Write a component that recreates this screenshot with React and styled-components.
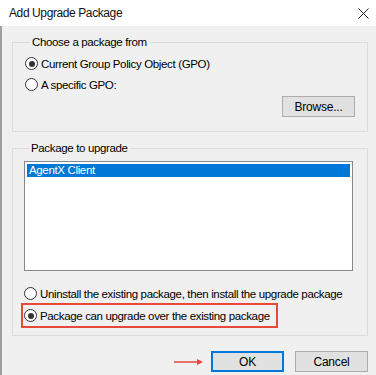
import React, { useState } from 'react';
import styled, { createGlobalStyle } from 'styled-components';

const GlobalStyle = createGlobalStyle`
  html, body {
    margin: 0;
    padding: 0;
    background: #f0f0f0;
  }
  body {
    font-family: "Liberation Sans", Arial, sans-serif;
    font-size: 11.5px;
    color: #000;
  }
`;

const Window = styled.div`
  width: 376px;
  height: 375px;
  display: flex;
  flex-direction: column;
  overflow: hidden;
  background: #f0f0f0;
`;

const TitleBar = styled.div`
  height: 26px;
  flex: none;
  background: #fff;
  display: flex;
  align-items: center;
  justify-content: space-between;
  padding: 0 7px 0 9px;
`;

const Title = styled.div`
  font-size: 12px;
  letter-spacing: -0.4px;
  color: #111;
`;

const CloseIcon = styled.svg`
  width: 11px;
  height: 11px;
`;

const Body = styled.div`
  flex: 1;
  border-left: 2px solid #a0a0a0;
  display: flex;
  flex-direction: column;
  padding: 10px 8px 0 10px;
`;

const Group = styled.fieldset`
  margin: ${p => p.$mt || 0}px 0 0 0;
  border: 1px solid #dcdcdc;
  padding: ${p => p.$pad};
  min-width: 0;
`;

const Legend = styled.legend`
  padding: 0 2px;
  margin-left: 5px;
  letter-spacing: -0.35px;
`;

const RadioRow = styled.label`
  display: flex;
  align-items: center;
  gap: 3px;
  height: 21px;
  letter-spacing: -0.35px;
  white-space: nowrap;
`;

const RadioCircle = styled.span`
  width: 11px;
  height: 11px;
  border: 1px solid #333;
  border-radius: 50%;
  background: #fff;
  display: flex;
  align-items: center;
  justify-content: center;
  flex: none;
  &::after {
    content: '';
    width: 6px;
    height: 6px;
    border-radius: 50%;
    background: ${p => (p.$checked ? '#333' : 'transparent')};
  }
`;

const BrowseRow = styled.div`
  display: flex;
  justify-content: flex-end;
  margin-top: 1px;
`;

const Button = styled.button`
  font-family: inherit;
  font-size: 12px;
  letter-spacing: -0.2px;
  width: 73px;
  height: 21px;
  padding: 0;
  background: #e1e1e1;
  color: #000;
  border: ${p => (p.$default ? '2px solid #0078d7' : '1px solid #adadad')};
`;

const ListBox = styled.div`
  height: 110px;
  border: 1px solid #828790;
  background: #fff;
  padding: 2px;
  box-sizing: border-box;
  margin-bottom: 12px;
`;

const ListItem = styled.div`
  height: 13px;
  line-height: 13px;
  padding-left: 2px;
  letter-spacing: -0.35px;
  background: ${p => (p.$selected ? '#0078d7' : 'transparent')};
  color: ${p => (p.$selected ? '#fff' : '#000')};
`;

const Highlight = styled.div`
  border: 2px solid #e8473c;
  margin: -1px 0 0 -3px;
  padding-left: 1px;
  width: 252px;
  height: 21px;
  display: flex;
  align-items: center;
`;

const Footer = styled.div`
  display: flex;
  align-items: center;
  justify-content: flex-end;
  gap: 11px;
  margin-top: 15px;
`;

const Arrow = styled.svg`
  width: 30px;
  height: 8px;
  margin-right: -4px;
`;

const Radio = ({ checked, children }) => (
  <RadioRow>
    <RadioCircle $checked={checked} />
    {children}
  </RadioRow>
);

export default function App() {
  const [source, setSource] = useState('gpo');
  const [mode, setMode] = useState('over');

  return (
    <>
      <GlobalStyle />
      <Window>
        <TitleBar>
          <Title>Add Upgrade Package</Title>
          <CloseIcon viewBox="0 0 11 11">
            <path d="M0.5 0.5 L10.5 10.5 M10.5 0.5 L0.5 10.5" stroke="#222" strokeWidth="1" />
          </CloseIcon>
        </TitleBar>
        <Body>
          <Group $pad="5px 12px 14px 12px">
            <Legend>Choose a package from</Legend>
            <div onClick={() => setSource('gpo')}>
              <Radio checked={source === 'gpo'}>Current Group Policy Object (GPO)</Radio>
            </div>
            <div onClick={() => setSource('specific')}>
              <Radio checked={source === 'specific'}>A specific GPO:</Radio>
            </div>
            <BrowseRow>
              <Button>Browse...</Button>
            </BrowseRow>
          </Group>
          <Group $mt={10} $pad="7px 14px 7px 11px">
            <Legend>Package to upgrade</Legend>
            <ListBox>
              <ListItem $selected>AgentX Client</ListItem>
            </ListBox>
            <div onClick={() => setMode('reinstall')}>
              <Radio checked={mode === 'reinstall'}>
                Uninstall the existing package, then install the upgrade package
              </Radio>
            </div>
            <Highlight onClick={() => setMode('over')}>
              <Radio checked={mode === 'over'}>Package can upgrade over the existing package</Radio>
            </Highlight>
          </Group>
          <Footer>
            <Arrow viewBox="0 0 30 8">
              <path d="M0 4 H27" stroke="#e8473c" strokeWidth="1.5" />
              <path d="M23 1 L29 4 L23 7 Z" fill="#e8473c" />
            </Arrow>
            <Button $default>OK</Button>
            <Button>Cancel</Button>
          </Footer>
        </Body>
      </Window>
    </>
  );
}
